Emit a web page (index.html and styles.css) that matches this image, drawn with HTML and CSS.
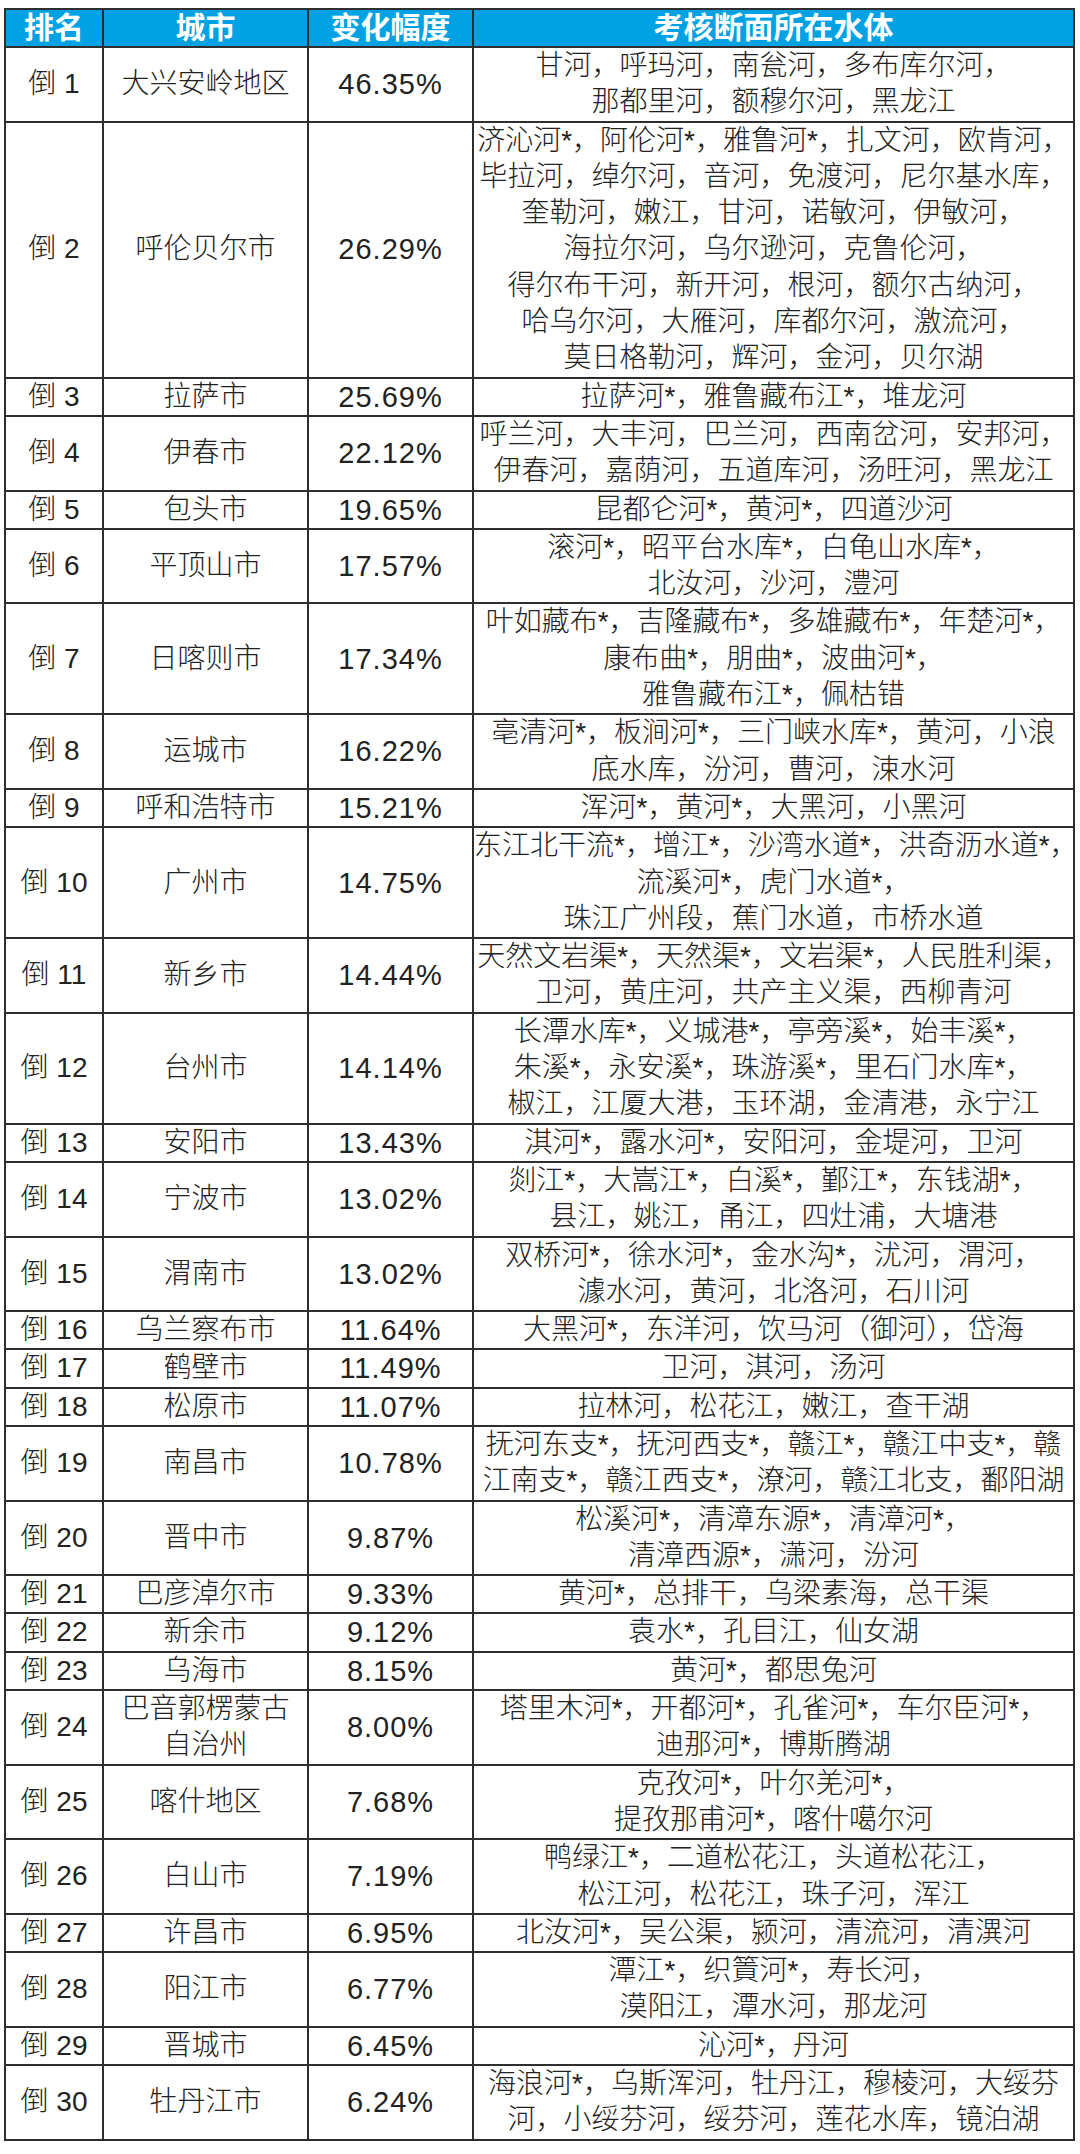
FILE: index.html
```html
<!DOCTYPE html>
<html lang="zh-CN">
<head>
<meta charset="utf-8">
<title>考核断面所在水体</title>
<link rel="stylesheet" href="styles.css">
</head>
<body>
<table class="rank-table">
<colgroup>
<col class="c-rank"><col class="c-city"><col class="c-pct"><col class="c-water">
</colgroup>
<thead>
<tr><th>排名</th><th>城市</th><th>变化幅度</th><th>考核断面所在水体</th></tr>
</thead>
<tbody>
<tr><td>倒 1</td><td>大兴安岭地区</td><td class="num">46.35%</td><td>甘河，呼玛河，南瓮河，多布库尔河，<br>那都里河，额穆尔河，黑龙江</td></tr>
<tr><td>倒 2</td><td>呼伦贝尔市</td><td class="num">26.29%</td><td>济沁河*，阿伦河*，雅鲁河*，扎文河，欧肯河，<br>毕拉河，绰尔河，音河，免渡河，尼尔基水库，<br>奎勒河，嫩江，甘河，诺敏河，伊敏河，<br>海拉尔河，乌尔逊河，克鲁伦河，<br>得尔布干河，新开河，根河，额尔古纳河，<br>哈乌尔河，大雁河，库都尔河，激流河，<br>莫日格勒河，辉河，金河，贝尔湖</td></tr>
<tr><td>倒 3</td><td>拉萨市</td><td class="num">25.69%</td><td>拉萨河*，雅鲁藏布江*，堆龙河</td></tr>
<tr><td>倒 4</td><td>伊春市</td><td class="num">22.12%</td><td>呼兰河，大丰河，巴兰河，西南岔河，安邦河，<br>伊春河，嘉荫河，五道库河，汤旺河，黑龙江</td></tr>
<tr><td>倒 5</td><td>包头市</td><td class="num">19.65%</td><td>昆都仑河*，黄河*，四道沙河</td></tr>
<tr><td>倒 6</td><td>平顶山市</td><td class="num">17.57%</td><td>滚河*，昭平台水库*，白龟山水库*，<br>北汝河，沙河，澧河</td></tr>
<tr><td>倒 7</td><td>日喀则市</td><td class="num">17.34%</td><td>叶如藏布*，吉隆藏布*，多雄藏布*，年楚河*，<br>康布曲*，朋曲*，波曲河*，<br>雅鲁藏布江*，佩枯错</td></tr>
<tr><td>倒 8</td><td>运城市</td><td class="num">16.22%</td><td>亳清河*，板涧河*，三门峡水库*，黄河，小浪<br>底水库，汾河，曹河，涑水河</td></tr>
<tr><td>倒 9</td><td>呼和浩特市</td><td class="num">15.21%</td><td>浑河*，黄河*，大黑河，小黑河</td></tr>
<tr><td>倒 10</td><td>广州市</td><td class="num">14.75%</td><td>东江北干流*，增江*，沙湾水道*，洪奇沥水道*，<br>流溪河*，虎门水道*，<br>珠江广州段，蕉门水道，市桥水道</td></tr>
<tr><td>倒 11</td><td>新乡市</td><td class="num">14.44%</td><td>天然文岩渠*，天然渠*，文岩渠*，人民胜利渠，<br>卫河，黄庄河，共产主义渠，西柳青河</td></tr>
<tr><td>倒 12</td><td>台州市</td><td class="num">14.14%</td><td>长潭水库*，义城港*，亭旁溪*，始丰溪*，<br>朱溪*，永安溪*，珠游溪*，里石门水库*，<br>椒江，江厦大港，玉环湖，金清港，永宁江</td></tr>
<tr><td>倒 13</td><td>安阳市</td><td class="num">13.43%</td><td>淇河*，露水河*，安阳河，金堤河，卫河</td></tr>
<tr><td>倒 14</td><td>宁波市</td><td class="num">13.02%</td><td>剡江*，大嵩江*，白溪*，鄞江*，东钱湖*，<br>县江，姚江，甬江，四灶浦，大塘港</td></tr>
<tr><td>倒 15</td><td>渭南市</td><td class="num">13.02%</td><td>双桥河*，徐水河*，金水沟*，沋河，渭河，<br>澽水河，黄河，北洛河，石川河</td></tr>
<tr><td>倒 16</td><td>乌兰察布市</td><td class="num">11.64%</td><td>大黑河*，东洋河，饮马河（御河），岱海</td></tr>
<tr><td>倒 17</td><td>鹤壁市</td><td class="num">11.49%</td><td>卫河，淇河，汤河</td></tr>
<tr><td>倒 18</td><td>松原市</td><td class="num">11.07%</td><td>拉林河，松花江，嫩江，查干湖</td></tr>
<tr><td>倒 19</td><td>南昌市</td><td class="num">10.78%</td><td>抚河东支*，抚河西支*，赣江*，赣江中支*，赣<br>江南支*，赣江西支*，潦河，赣江北支，鄱阳湖</td></tr>
<tr><td>倒 20</td><td>晋中市</td><td class="num">9.87%</td><td>松溪河*，清漳东源*，清漳河*，<br>清漳西源*，潇河，汾河</td></tr>
<tr><td>倒 21</td><td>巴彦淖尔市</td><td class="num">9.33%</td><td>黄河*，总排干，乌梁素海，总干渠</td></tr>
<tr><td>倒 22</td><td>新余市</td><td class="num">9.12%</td><td>袁水*，孔目江，仙女湖</td></tr>
<tr><td>倒 23</td><td>乌海市</td><td class="num">8.15%</td><td>黄河*，都思兔河</td></tr>
<tr><td>倒 24</td><td>巴音郭楞蒙古<br>自治州</td><td class="num">8.00%</td><td>塔里木河*，开都河*，孔雀河*，车尔臣河*，<br>迪那河*，博斯腾湖</td></tr>
<tr><td>倒 25</td><td>喀什地区</td><td class="num">7.68%</td><td>克孜河*，叶尔羌河*，<br>提孜那甫河*，喀什噶尔河</td></tr>
<tr><td>倒 26</td><td>白山市</td><td class="num">7.19%</td><td>鸭绿江*，二道松花江，头道松花江，<br>松江河，松花江，珠子河，浑江</td></tr>
<tr><td>倒 27</td><td>许昌市</td><td class="num">6.95%</td><td>北汝河*，吴公渠，颍河，清流河，清潩河</td></tr>
<tr><td>倒 28</td><td>阳江市</td><td class="num">6.77%</td><td>潭江*，织篢河*，寿长河，<br>漠阳江，潭水河，那龙河</td></tr>
<tr><td>倒 29</td><td>晋城市</td><td class="num">6.45%</td><td>沁河*，丹河</td></tr>
<tr><td>倒 30</td><td>牡丹江市</td><td class="num">6.24%</td><td>海浪河*，乌斯浑河，牡丹江，穆棱河，大绥芬<br>河，小绥芬河，绥芬河，莲花水库，镜泊湖</td></tr>
</tbody>
</table>
</body>
</html>
```
FILE: styles.css
```css
html, body {
  margin: 0;
  padding: 0;
  background: #ffffff;
}
body {
  padding: 8px 6px 0 4px;
  font-family: "Liberation Sans", "Noto Sans CJK SC", sans-serif;
  color: #222222;
}
.rank-table {
  width: 1069px;
  border-collapse: collapse;
  table-layout: fixed;
  border: 2px solid #2e2e2e;
}
.c-rank { width: 98px; }
.c-city { width: 205px; }
.c-pct { width: 165px; }
.c-water { width: 601px; }
.rank-table th {
  background: #00a2e3;
  color: #ffffff;
  font-size: 30px;
  font-weight: 700;
  height: 36px;
  line-height: 36px;
  padding: 0;
  border: 2px solid #2e2e2e;
  text-align: center;
  white-space: nowrap;
}
.rank-table td {
  font-size: 28px;
  font-weight: 300;
  line-height: 36.3px;
  padding: 0;
  border: 2px solid #2e2e2e;
  text-align: center;
  vertical-align: middle;
  white-space: nowrap;
}
.rank-table td.num {
  font-size: 29px;
  letter-spacing: 1px;
}
```
